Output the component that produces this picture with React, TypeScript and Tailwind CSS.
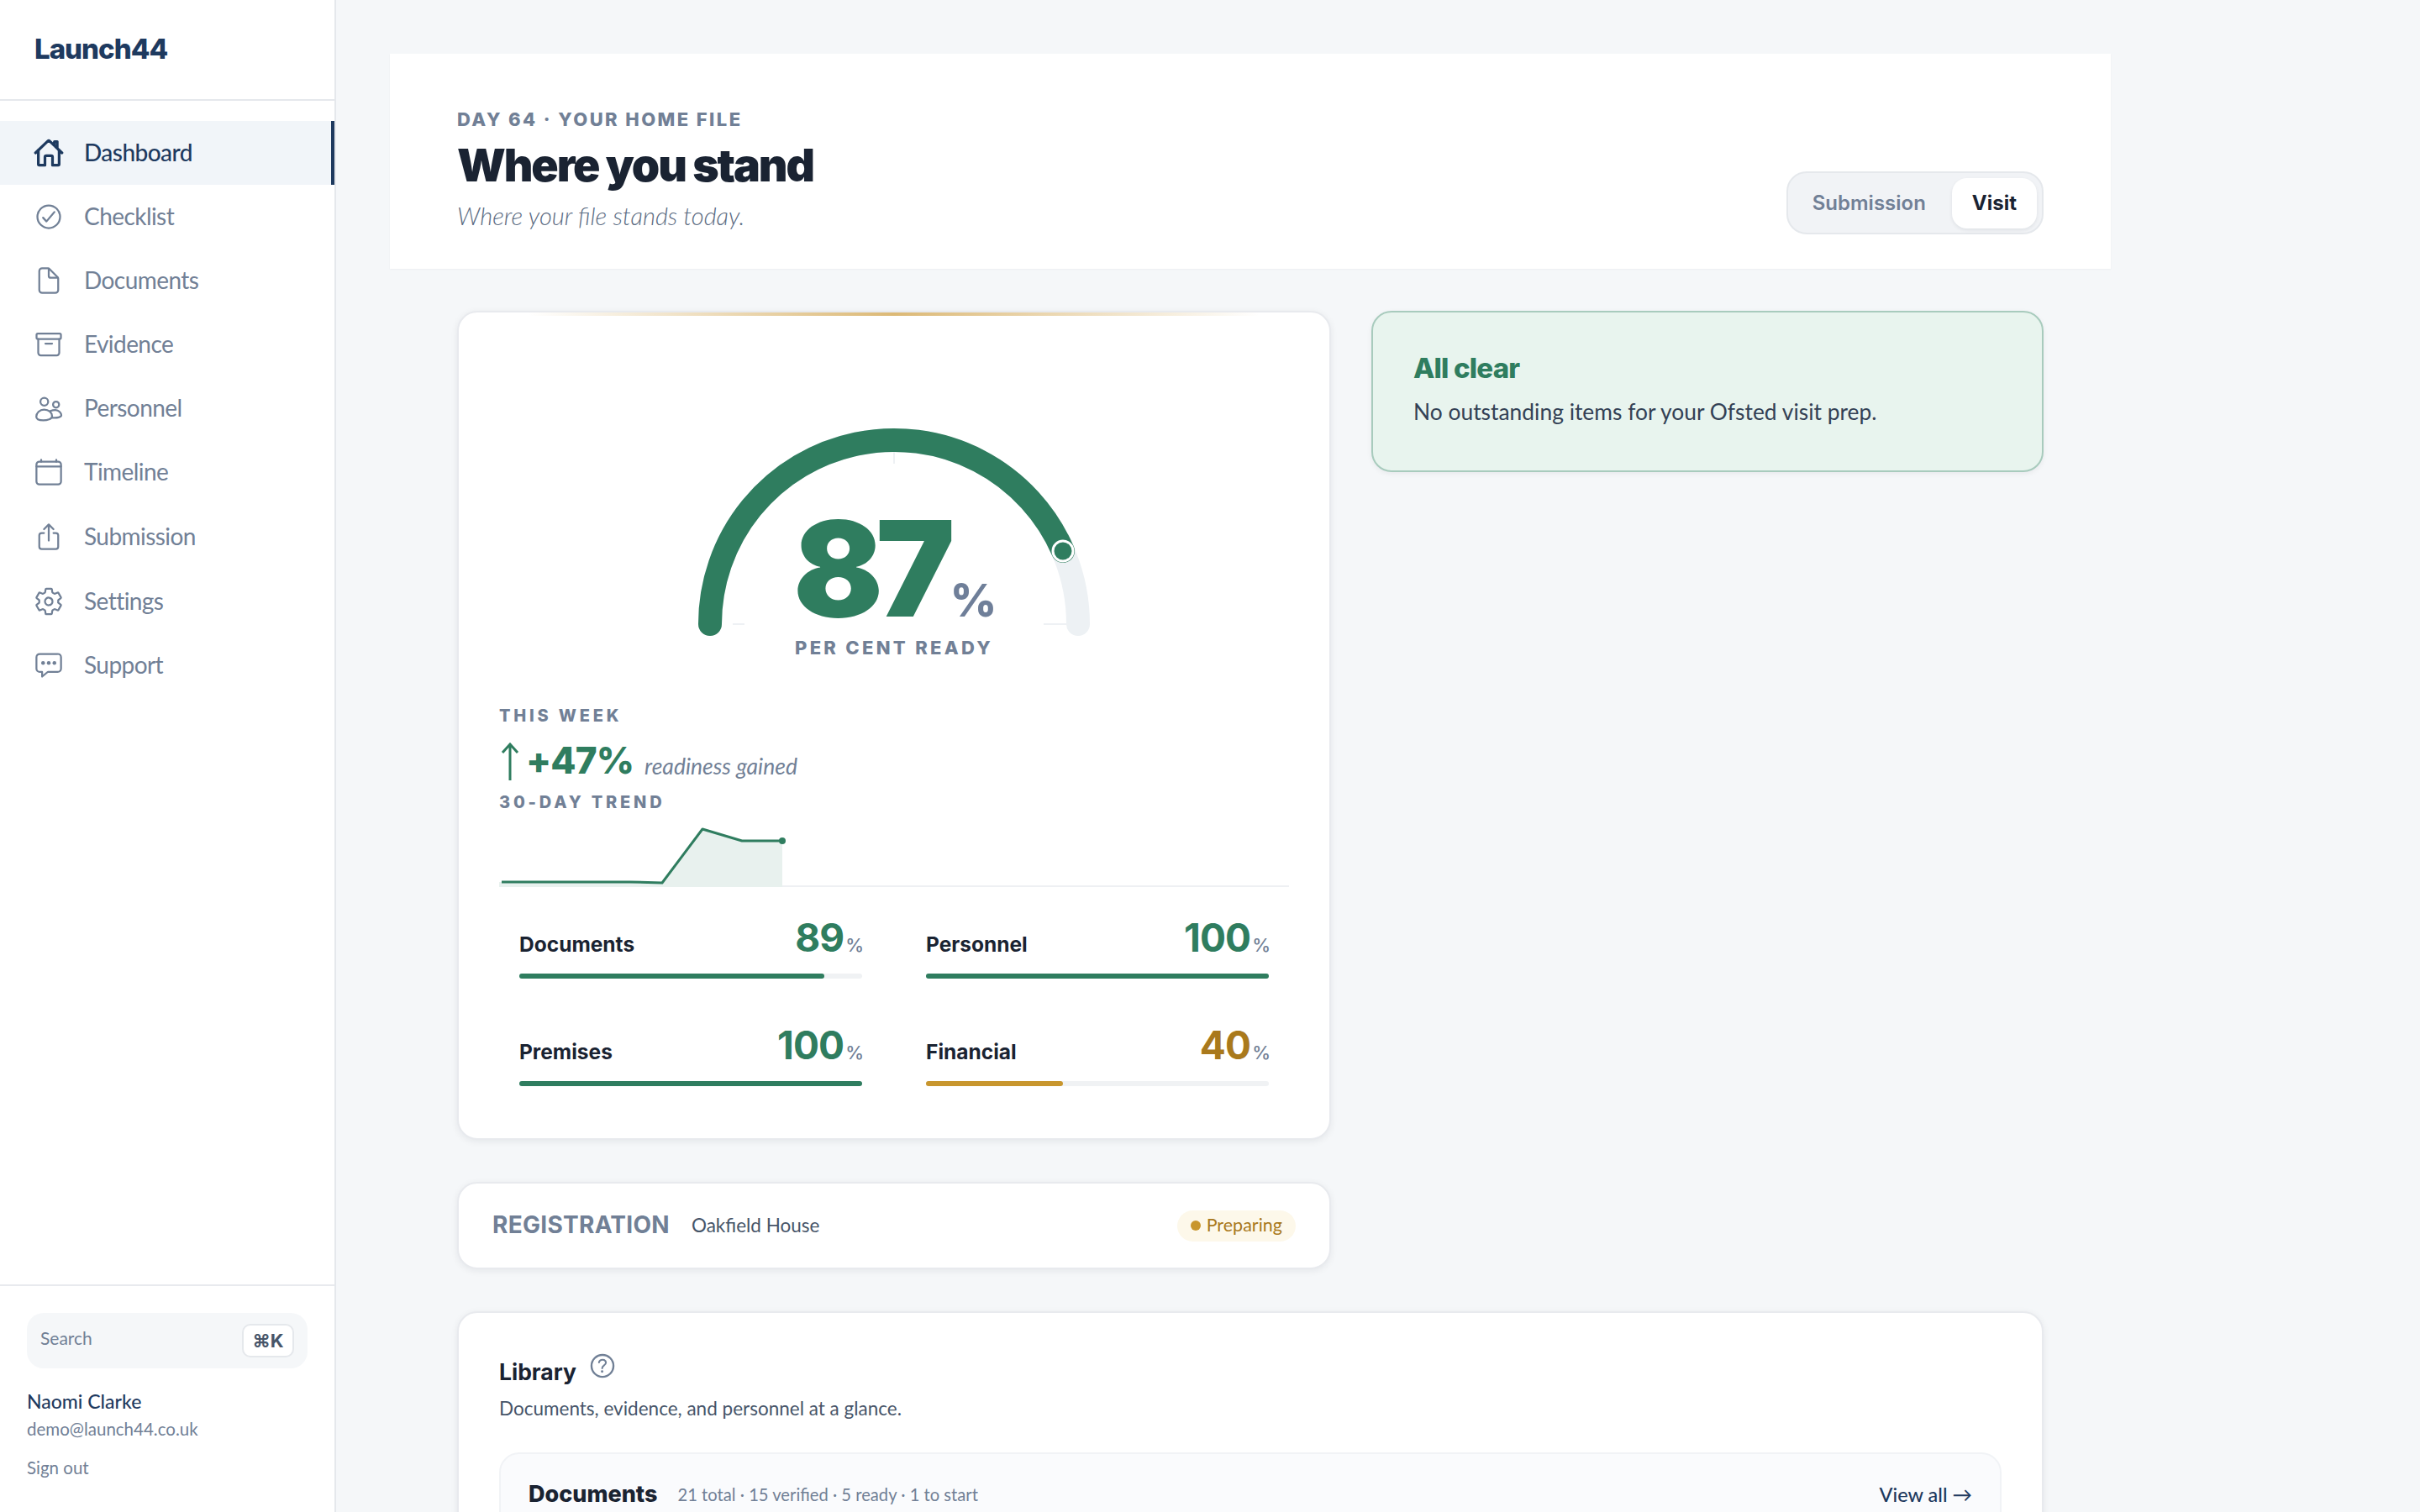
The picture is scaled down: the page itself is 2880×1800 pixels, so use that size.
import React from 'react';
import {
  IoCalendarClearOutline,
  IoChatboxEllipsesOutline,
  IoCheckmarkCircleOutline,
  IoDocumentOutline,
  IoHelpCircleOutline,
  IoHomeOutline,
  IoSettingsOutline,
  IoShareOutline,
} from 'react-icons/io5';

const ArchiveIcon = ({ size = 36, className = '' }: { size?: number; className?: string }) => (
  <svg className={className} width={size} height={size} viewBox="0 0 36 36" fill="none" stroke="currentColor" strokeWidth="2.25" strokeLinecap="round" strokeLinejoin="round">
    <rect x="3.5" y="5" width="29" height="6.5" rx="1.5" />
    <path d="M5.5 11.5 V28 a3 3 0 0 0 3 3 h19 a3 3 0 0 0 3 -3 V11.5" />
    <path d="M14 17 H22" />
  </svg>
);

const PeopleIcon = ({ size = 36, className = '' }: { size?: number; className?: string }) => (
  <svg className={className} width={size} height={size} viewBox="0 0 36 36" fill="none" stroke="currentColor" strokeWidth="2.25" strokeLinecap="round" strokeLinejoin="round">
    <circle cx="12.7" cy="10.3" r="4.6" />
    <circle cx="26.7" cy="13.7" r="3.6" />
    <path d="M12.5 19.5 C7 19.5 3.2 24 3.2 28 C3.2 31 7 32.4 11.5 32.4 C16 32.4 22 31 22 27.5 C22 23 18 19.5 12.5 19.5Z" />
    <path d="M20 21.3 C22 20.3 24 20 26 20 C30 20 33 23.8 33 26.3 C33 28.8 28 29.8 22.3 29.3" />
  </svg>
);

const navItems = [
  { label: 'Dashboard', icon: IoHomeOutline, active: true },
  { label: 'Checklist', icon: IoCheckmarkCircleOutline },
  { label: 'Documents', icon: IoDocumentOutline },
  { label: 'Evidence', icon: ArchiveIcon },
  { label: 'Personnel', icon: PeopleIcon },
  { label: 'Timeline', icon: IoCalendarClearOutline },
  { label: 'Submission', icon: IoShareOutline, tall: true },
  { label: 'Settings', icon: IoSettingsOutline },
  { label: 'Support', icon: IoChatboxEllipsesOutline },
];

const stats = [
  { label: 'Documents', value: 89 },
  { label: 'Personnel', value: 100 },
  { label: 'Premises', value: 100 },
  { label: 'Financial', value: 40, warn: true },
];

const Sidebar = () => (
  <aside className="flex h-full w-[400px] shrink-0 flex-col border-r-2 border-[#e5e8ec] bg-white">
    <div className="flex h-[120px] shrink-0 items-center border-b-2 border-[#e5e8ec] pl-[41px] font-[Inter,sans-serif] text-[33px] font-extrabold tracking-[-0.03em] text-[#1e3a5f]">
      Launch44
    </div>
    <nav className="flex flex-col pt-[24px]">
      {navItems.map((item) => {
        const Icon = item.icon;
        return (
          <div
            key={item.label}
            className={`flex items-center gap-[24px] pl-[40px] text-[28px] tracking-[-0.02em] ${item.tall ? 'h-[78px]' : 'h-[76px]'} ${
              item.active
                ? 'border-r-[4px] border-[#1e3a5f] bg-[#f1f5f9] font-medium text-[#1e3a5f] [&_path]:[stroke-width:46]'
                : 'text-[#718096]'
            }`}
          >
            <Icon size={36} className="shrink-0" />
            <span className="pb-[3px]">{item.label}</span>
          </div>
        );
      })}
    </nav>
    <div className="mt-auto border-t-2 border-[#e8eaee] px-[32px] pb-[37px] pt-[32px]">
      <div className="flex h-[66px] items-center justify-between rounded-[20px] bg-[#f5f7f9] pl-[16px] pr-[16px]">
        <span className="pb-[6px] text-[21px] text-[#718096]">Search</span>
        <span className="flex h-[40px] w-[62px] items-center justify-center rounded-[10px] border-2 border-[#e5e8ec] bg-white font-[Inter,sans-serif] text-[22px] font-bold text-[#475569]">
          ⌘K
        </span>
      </div>
      <div className="mt-[23px] text-[23px] font-medium leading-[32px] text-[#1e3a5f]">Naomi Clarke</div>
      <div className="mt-[1px] text-[20.5px] leading-[32px] text-[#718096]">demo@launch44.co.uk</div>
      <div className="mt-[14px] text-[20.5px] leading-[32px] text-[#718096]">Sign out</div>
    </div>
  </aside>
);

const Gauge = () => (
  <div className="relative mx-auto h-[290px] w-[480px]">
    <svg width="480" height="290" viewBox="0 0 480 290" fill="none">
      <path d="M21 244 A219 219 0 0 1 459 244" stroke="#edf1f4" strokeWidth="28" strokeLinecap="round" />
      <path d="M48 244 H62 M418 244 H447 M240 53 V39" stroke="#eef1f4" strokeWidth="2" />
      <path d="M21 244 A219 219 0 0 1 441 157" stroke="#2f7d5f" strokeWidth="28" strokeLinecap="round" />
      <circle cx="441" cy="157" r="12" fill="#2f7d5f" stroke="#ffffff" strokeWidth="3" />
    </svg>
    <div className="absolute left-[120px] top-[98px] flex items-baseline font-[Inter,sans-serif]">
      <span className="text-[158px] font-black leading-[160px] tracking-[-0.055em] text-[#2f7d5f]">87</span>
      <span className="ml-[3px] text-[54px] font-extrabold leading-none tracking-[-0.03em] text-[#6f7f99]">%</span>
    </div>
    <div className="absolute left-0 right-0 top-[258px] text-center font-[Inter,sans-serif] text-[22px] font-extrabold leading-[28px] tracking-[0.15em] text-[#718096]">
      PER CENT READY
    </div>
  </div>
);

const TrendChart = () => (
  <svg className="mt-[7px] block" width="940" height="80" viewBox="0 0 940 80" fill="none">
    <path d="M0 79 H940" stroke="#eef0f3" strokeWidth="2" />
    <path d="M0 80 V74 H156 L194 75 L242 11 L289 25 H337 V80 Z" fill="#e8f1ee" />
    <path d="M3 74 H156 L194 75 L242 11 L289 25 H337" stroke="#2f7d5f" strokeWidth="3" strokeLinejoin="round" />
    <circle cx="337" cy="25" r="4" fill="#2f7d5f" />
  </svg>
);

const StatBar = ({ label, value, warn }: { label: string; value: number; warn?: boolean }) => (
  <div>
    <div className="flex h-[50px] items-center justify-between font-[Inter,sans-serif]">
      <span className="pt-[16px] text-[24.5px] font-bold text-[#1a2332]">{label}</span>
      <span className="-mr-[2px] flex items-baseline">
        <span className={`text-[46px] font-bold leading-[50px] tracking-[-0.02em] ${warn ? 'text-[#a9791c]' : 'text-[#2f7d5f]'}`}>
          {value}
        </span>
        <span className="ml-[2px] text-[22px] font-medium text-[#718096]">%</span>
      </span>
    </div>
    <div className="mt-[18px] h-[6px] rounded-full bg-[#f0f2f4]">
      <div
        className={`h-full rounded-full ${warn ? 'bg-[#c8962e]' : 'bg-[#2f7d5f]'}`}
        style={{ width: `${value}%` }}
      />
    </div>
  </div>
);

const ReadinessCard = () => (
  <section className="relative rounded-[24px] border-2 border-[#e8eaee] bg-white px-[48px] pb-[62px] pt-[127px] shadow-[0_2px_8px_rgba(15,23,42,0.07)]">
    <div className="absolute left-[8%] right-[8%] top-0 h-[4px] bg-gradient-to-r from-transparent via-[#dcb976] to-transparent" />
    <Gauge />
    <div className="mt-[49px] font-[Inter,sans-serif] text-[20px] font-extrabold leading-[28px] tracking-[0.19em] text-[#718096]">
      THIS WEEK
    </div>
    <div className="flex h-[75px] items-center">
      <svg className="ml-[2px] mt-[6px]" width="22" height="46" viewBox="0 0 22 46" fill="none">
        <path d="M11 45 V2 M2 12 L11 2 L20 12" stroke="#2f7d5f" strokeWidth="3" />
      </svg>
      <span className="ml-[8px] mt-[2px] font-[Inter,sans-serif] text-[44px] font-extrabold tracking-[-0.02em] text-[#2f7d5f]">+47%</span>
      <span className="ml-[13px] mt-[18px] text-[26.5px] italic text-[#718096]">readiness gained</span>
    </div>
    <div className="font-[Inter,sans-serif] text-[20px] font-extrabold leading-[28px] tracking-[0.19em] text-[#718096]">
      30-DAY TREND
    </div>
    <TrendChart />
    <div className="mt-[35px] grid grid-cols-2 gap-x-[76px] gap-y-[54px] px-[24px]">
      {stats.map((s) => (
        <StatBar key={s.label} label={s.label} value={s.value} warn={s.warn} />
      ))}
    </div>
  </section>
);

const App = () => (
  <div className="flex h-screen overflow-hidden bg-[#f5f7f9] font-[Lato,sans-serif]">
    <Sidebar />
    <main className="flex-1 overflow-hidden pl-[64px] pt-[64px]">
      <header className="flex h-[256px] w-[2048px] items-end justify-between bg-white px-[80px] pb-[41px] shadow-[0_1px_2px_rgba(15,23,42,0.04)]">
        <div className="pb-[4px]">
          <div className="font-[Inter,sans-serif] text-[22px] font-extrabold leading-[28px] tracking-[0.11em] text-[#718096]">
            DAY 64 · YOUR HOME FILE
          </div>
          <h1 className="mt-[11px] font-[Inter,sans-serif] text-[53.5px] font-black leading-[60px] tracking-[-0.04em] text-[#1a2332]">
            Where you stand
          </h1>
          <p className="mt-[12px] text-[29px] font-light italic leading-[36px] text-[#5b6b82]">Where your file stands today.</p>
        </div>
        <div className="flex h-[75px] items-start gap-[7px] rounded-[24px] border-2 border-[#e5e8ec] bg-[#f1f3f6] pl-[5px] pr-[6px] pt-[6px] font-[Inter,sans-serif] text-[24px] font-semibold">
          <span className="flex h-[60px] items-center px-[24px] text-[#718096]">Submission</span>
          <span className="flex h-[60px] items-center rounded-[18px] bg-white px-[24px] font-bold text-[#1a2332] shadow-[0_2px_4px_rgba(15,23,42,0.08)]">
            Visit
          </span>
        </div>
      </header>

      <div className="ml-[80px] mt-[50px] flex w-[1888px] flex-col gap-[50px]">
        <div className="grid grid-cols-[1040px_800px] items-start gap-x-[48px]">
          <div className="flex flex-col gap-[50px]">
            <ReadinessCard />
            <section className="flex h-[104px] items-center justify-between rounded-[24px] border-2 border-[#e8eaee] bg-white pl-[40px] pr-[40px] shadow-[0_2px_8px_rgba(15,23,42,0.07)]">
              <div className="flex items-center gap-[26px] pb-[2px]">
                <span className="font-[Inter,sans-serif] text-[28px] font-bold tracking-[0.01em] text-[#718096]">REGISTRATION</span>
                <span className="pt-[2px] text-[22.5px] text-[#475569]">Oakfield House</span>
              </div>
              <span className="flex h-[37px] items-center gap-[7px] rounded-full bg-[#fdf8ea] px-[16px] pb-[2px] text-[21.5px] text-[#a9791c]">
                <span className="mt-[2px] h-[12px] w-[12px] rounded-full bg-[#c8962e]" />
                Preparing
              </span>
            </section>
          </div>
          <section className="h-[192px] rounded-[24px] border-2 border-[#a8cbbd] bg-[#e8f4ee] px-[48px] pt-[46px] shadow-[0_2px_6px_rgba(15,23,42,0.06)]">
            <h2 className="font-[Inter,sans-serif] text-[33px] font-extrabold leading-[40px] tracking-[-0.025em] text-[#2f7d5f]">All clear</h2>
            <p className="mt-[14px] text-[26.4px] leading-[36px] text-[#334155]">No outstanding items for your Ofsted visit prep.</p>
          </section>
        </div>
        <section className="rounded-[24px] border-2 border-[#e8eaee] bg-white px-[48px] pb-[48px] pt-[50px] shadow-[0_2px_8px_rgba(15,23,42,0.07)]">
          <div className="flex h-[40px] items-center gap-[12px]">
            <h2 className="font-[Inter,sans-serif] text-[26.5px] font-bold leading-[40px] text-[#1a2332]">Library</h2>
            <IoHelpCircleOutline size={38} className="-translate-y-[7px] text-[#718096]" />
          </div>
          <p className="mt-[8px] text-[22.5px] leading-[32px] text-[#475569]">Documents, evidence, and personnel at a glance.</p>
          <div className="mt-[36px] flex h-[120px] items-start justify-between rounded-[24px] border-2 border-[#f1f3f6] bg-[#fafbfd] px-[33px] pt-[28px]">
            <div className="flex items-center gap-[24px]">
              <span className="font-[Inter,sans-serif] text-[27px] font-extrabold leading-[40px] text-[#1a2332]">Documents</span>
              <span className="text-[20.2px] text-[#718096]">21 total · 15 verified · 5 ready · 1 to start</span>
            </div>
            <span className="text-[23.5px] font-medium leading-[40px] text-[#1e3a5f]">View all →</span>
          </div>
        </section>
      </div>
    </main>
  </div>
);

export default App;
